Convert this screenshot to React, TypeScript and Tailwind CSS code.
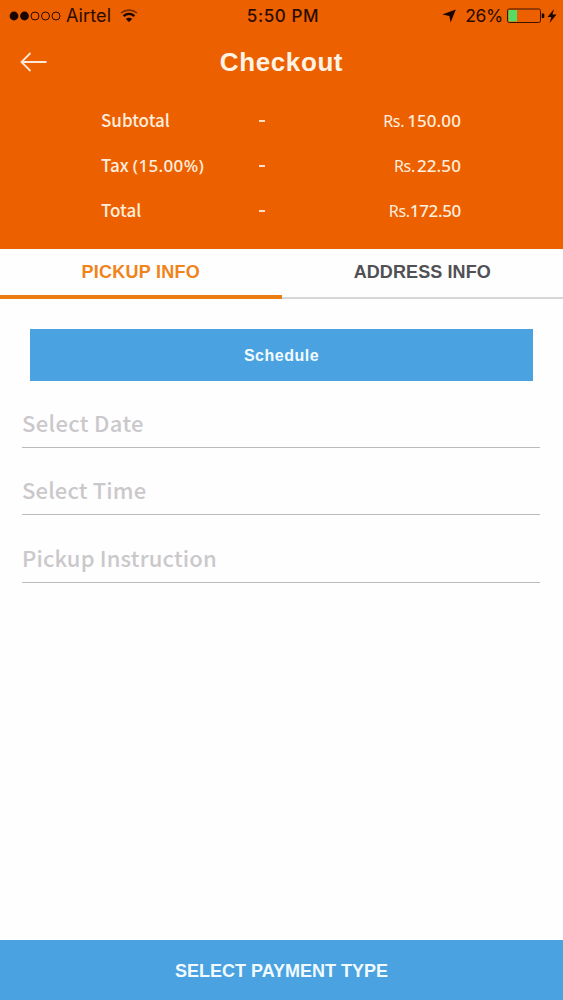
const summaryItems = [
  { label: "Subtotal", note: "", currency: "Rs.", amount: "150.00", gap: "gap-[3px]", spacing: "tracking-[0.1px]" },
  { label: "Tax", note: "(15.00%)", currency: "Rs.", amount: "22.50", gap: "gap-[2px]", spacing: "tracking-[0.1px]" },
  { label: "Total", note: "", currency: "Rs.", amount: "172.50", gap: "gap-0", spacing: "tracking-[-0.35px]" },
];

const fields = [
  { label: "Select Date", spacing: "tracking-[0.35px]" },
  { label: "Select Time", spacing: "tracking-[0.15px]" },
  { label: "Pickup Instruction", spacing: "tracking-[0.15px]" },
];

function StatusBar() {
  return (
    <div className="grid h-8 grid-cols-3 items-center font-['Inter',sans-serif] text-[17px] text-[#2b0d00]">
      <div className="flex items-center pl-[9px]">
        <svg width="52" height="12" viewBox="0 0 52 12" fill="none" stroke="currentColor">
          <circle cx="5" cy="6" r="4.4" fill="#1a0500" stroke="none" />
          <circle cx="15.5" cy="6" r="4.4" fill="#1a0500" stroke="none" />
          <circle cx="26" cy="6" r="4" />
          <circle cx="36.5" cy="6" r="4" />
          <circle cx="47" cy="6" r="4" />
        </svg>
        <span className="ml-[5px] pb-px text-[18px] tracking-[0.1px]">Airtel</span>
        <svg className="ml-[9px]" width="18" height="14" viewBox="0 0 18 14" fill="none" stroke="#1a0500">
          <path d="M1 4C5.5 0.2 12.5 0.2 17 4" strokeWidth="1.6" opacity=".55" />
          <path d="M3.6 7.1C6.8 4.3 11.2 4.3 14.4 7.1" strokeWidth="2.4" />
          <path d="M5.8 10C7.7 8.2 10.3 8.2 12.2 10L9 13z" fill="#1a0500" stroke="none" />
        </svg>
      </div>
      <div className="pl-[3px] pt-px text-center font-medium tracking-[0.6px]">5:50 PM</div>
      <div className="flex items-center justify-end pr-[6px]">
        <svg width="14" height="14" viewBox="0 0 14 14" fill="#1a0500">
          <path d="M13.8 0.5L8.6 13.5L7.4 7L0.3 5.6z" />
        </svg>
        <span className="ml-[9px] text-[17.5px] tracking-[-0.3px]">26%</span>
        <svg className="ml-[4px]" width="38" height="16" viewBox="0 0 38 16" fill="none">
          <rect x="0.5" y="1" width="33" height="13.5" rx="1.8" stroke="#3a1400" />
          <rect x="1.5" y="2" width="8.5" height="11.5" fill="#55dc64" />
          <path d="M34.8 5.5h1.6q.9 0 .9 1v2.4q0 1-.9 1h-1.6z" fill="#1a0500" />
        </svg>
        <svg className="ml-[2px]" width="10" height="14" viewBox="0 0 10 14" fill="#1a0500">
          <path d="M7 0L0.5 8H4.4L2.6 14L9.5 5.5H5.4z" />
        </svg>
      </div>
    </div>
  );
}

function Summary() {
  return (
    <div className="ml-[101px] mt-2 w-[360px] text-[#ffeedd]">
      {summaryItems.map((item) => (
        <div key={item.label} className="flex h-[45px] items-center">
          <div className="flex w-[158px] items-center whitespace-nowrap pb-[2px] font-['Noto_Sans_CJK_SC',sans-serif] text-[17px] font-medium leading-6">
            <span>{item.label}</span>
            {item.note && (
              <span className="ml-[4px] pt-[2px] font-['Noto_Sans',sans-serif] text-[17px] tracking-[0.35px]">
                {item.note}
              </span>
            )}
          </div>
          <div className="h-[2px] w-[6px] bg-[#ffe0c4]" />
          <div
            className={`ml-auto flex items-baseline font-['Noto_Sans',sans-serif] ${item.gap}`}
          >
            <span className="text-[16px] tracking-[-0.3px]">{item.currency}</span>
            <span className={`text-[17px] font-medium ${item.spacing}`}>{item.amount}</span>
          </div>
        </div>
      ))}
    </div>
  );
}

export default function App() {
  return (
    <div className="flex h-[1000px] w-[563px] flex-col overflow-hidden bg-[#fefefe] font-['Liberation_Sans',sans-serif]">
      <header className="h-[249px] shrink-0 bg-[#ec6000]">
        <StatusBar />
        <div className="grid h-[58px] grid-cols-[60px_1fr_60px] items-center">
          <button type="button" aria-label="Back" className="pl-5 pt-[2px]">
            <svg width="28" height="20" viewBox="0 0 28 20" fill="none" stroke="#ffe9d6" strokeWidth="1.8">
              <path d="M26.5 10H1.5M10.5 1L1.5 10L10.5 19" />
            </svg>
          </button>
          <h1 className="pt-[2px] text-center text-[26px] font-bold tracking-[0.6px] text-[#fff3e6]">Checkout</h1>
        </div>
        <Summary />
      </header>

      <nav className="flex h-[50px] shrink-0 text-[18px] font-bold">
        <button type="button" className="flex-1 border-b-4 border-[#ec7d12] text-[#f0831a] tracking-[0.25px]">
          PICKUP INFO
        </button>
        <button type="button" className="flex-1 border-b-2 border-[#d6d6d6] pb-[2px] text-[#505055] tracking-[0.1px]">
          ADDRESS INFO
        </button>
      </nav>

      <main className="flex-1">
        <button
          type="button"
          className="mx-[30px] mt-[30px] block h-[52px] w-[503px] bg-[#4aa2e0] pt-px text-[16px] font-bold tracking-[0.5px] text-[#f0faff]"
        >
          Schedule
        </button>
        <div className="ml-[22px] mt-[-1px] w-[518px]">
          {fields.map((field) => (
            <div
              key={field.label}
              className={`flex h-[67.5px] items-end border-b border-[#bdbabd] pb-[8px] font-['Noto_Sans_CJK_SC',sans-serif] text-[22px] font-medium leading-[34px] text-[#cbc8cb] ${field.spacing}`}
            >
              {field.label}
            </div>
          ))}
        </div>
      </main>

      <button
        type="button"
        className="h-[60px] shrink-0 bg-[#4aa2e0] pt-[2px] text-[18px] font-bold text-[#f0faff]"
      >
        SELECT PAYMENT TYPE
      </button>
    </div>
  );
}
